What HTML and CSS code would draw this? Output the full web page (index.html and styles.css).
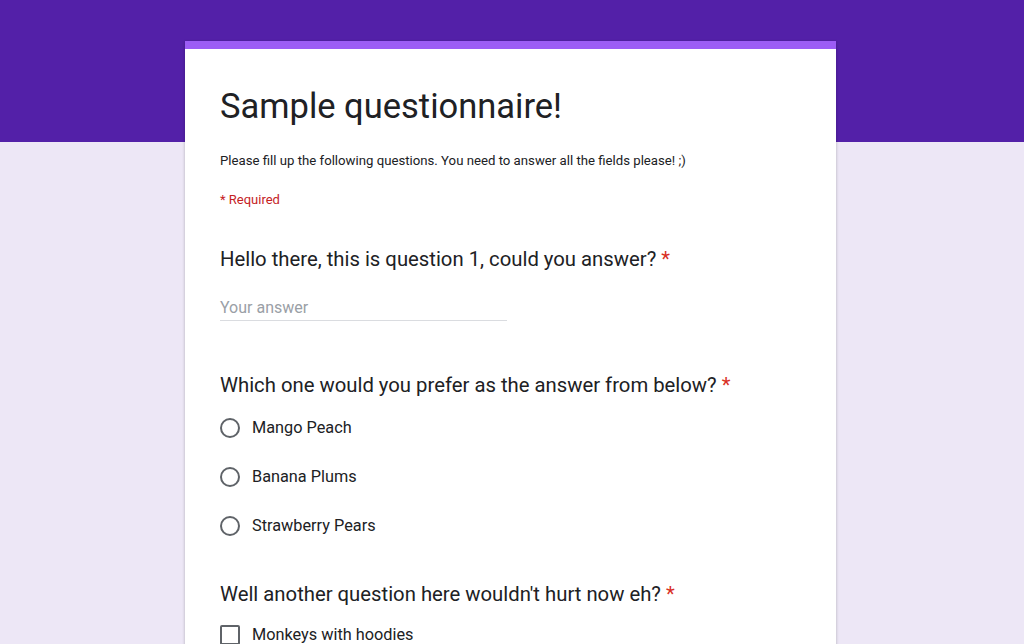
FILE: index.html
```html
<!DOCTYPE html>
<html>
<head>
<meta charset="utf-8">
<link rel="stylesheet" href="styles.css">
</head>
<body>
<div class="card">
  <h1 class="title">Sample questionnaire!</h1>
  <p class="desc">Please fill up the following questions. You need to answer all the fields please! ;)</p>
  <p class="req">* Required</p>

  <div class="q q1">
    <div class="qtitle">Hello there, this is question 1, could you answer? <span class="ast">*</span></div>
    <div class="input">Your answer</div>
  </div>

  <div class="q q2">
    <div class="qtitle">Which one would you prefer as the answer from below? <span class="ast">*</span></div>
    <div class="opts">
      <div class="opt"><span class="radio"></span><span>Mango Peach</span></div>
      <div class="opt"><span class="radio"></span><span>Banana Plums</span></div>
      <div class="opt"><span class="radio"></span><span>Strawberry Pears</span></div>
    </div>
  </div>

  <div class="q q3">
    <div class="qtitle">Well another question here wouldn't hurt now eh? <span class="ast">*</span></div>
    <div class="opts">
      <div class="opt"><span class="check"></span><span>Monkeys with hoodies</span></div>
    </div>
  </div>
</div>
</body>
</html>
```
FILE: styles.css
```css
html, body {
  margin: 0;
  padding: 0;
  height: 100%;
  overflow: hidden;
}
body {
  background: linear-gradient(to bottom, #5320a8 0, #5320a8 142px, #ede7f6 142px, #ede7f6 100%);
  font-family: Roboto, "Liberation Sans", Arial, sans-serif;
  color: #202124;
}
.card {
  width: 651px;
  box-sizing: border-box;
  margin: 41px 0 0 185px;
  background: #fff;
  border-top: 8px solid #9c5cf5;
  box-shadow: 0 1px 3px rgba(0,0,0,0.25);
  padding: 37px 35px 40px 35px;
  min-height: 700px;
}
.title {
  margin: 0;
  font-size: 34.5px;
  line-height: 40px;
  font-weight: 400;
  color: #202124;
}
.desc {
  margin: 26px 0 0;
  font-size: 13.2px;
  line-height: 18px;
  color: #202124;
}
.req {
  margin: 20px 0 0;
  font-size: 13px;
  line-height: 20px;
  color: #c5221f;
}
.q { display: flex; flex-direction: column; }
.q1 { margin-top: 37px; }
.qtitle {
  font-size: 20.3px;
  line-height: 24px;
  color: #202124;
}
.ast { color: #d93025; }
.input {
  margin-top: 25px;
  width: 287px;
  font-size: 16px;
  line-height: 24px;
  color: #9aa0a6;
  border-bottom: 1px solid #dadce0;
  padding-bottom: 0;
}
.q2 { margin-top: 52px; }
.opts {
  display: flex;
  flex-direction: column;
  gap: 25px;
  margin-top: 19px;
}
.opt {
  display: flex;
  align-items: center;
  gap: 12px;
  font-size: 16.3px;
  line-height: 24px;
  color: #202124;
}
.radio {
  width: 16px;
  height: 16px;
  border: 2px solid #5f6368;
  border-radius: 50%;
  flex: none;
}
.q3 { margin-top: 44px; }
.q3 .opts { margin-top: 17px; }
.check {
  width: 16px;
  height: 16px;
  border: 2px solid #5f6368;
  border-radius: 2px;
  flex: none;
}
```
